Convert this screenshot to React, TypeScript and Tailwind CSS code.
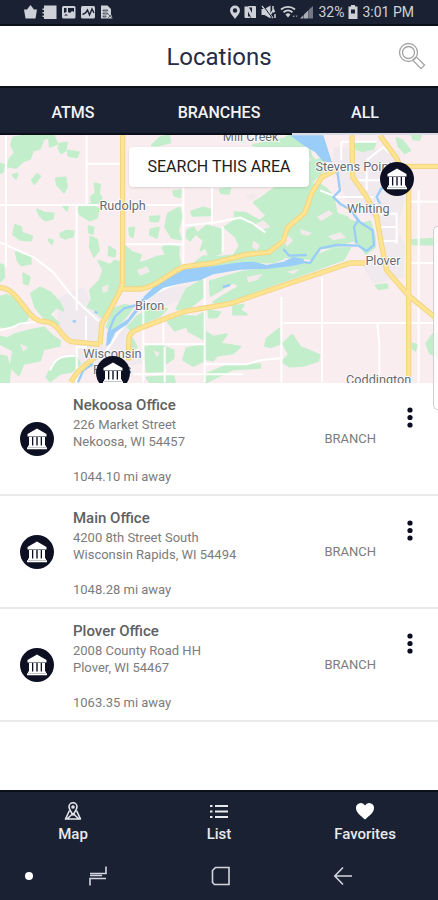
import { useState } from 'react'
import type { ReactNode } from 'react'

interface Office {
    name: string
    street: string
    city: string
    distance: string
    type: string
}

const offices: Office[] = [
    { name: 'Nekoosa Office', street: '226 Market Street', city: 'Nekoosa, WI 54457', distance: '1044.10 mi away', type: 'BRANCH' },
    { name: 'Main Office', street: '4200 8th Street South', city: 'Wisconsin Rapids, WI 54494', distance: '1048.28 mi away', type: 'BRANCH' },
    { name: 'Plover Office', street: '2008 County Road HH', city: 'Plover, WI 54467', distance: '1063.35 mi away', type: 'BRANCH' },
]

const tabs = ['ATMS', 'BRANCHES', 'ALL']

// Map shapes, all in the map's own 1314 x 741 units
const forests = [
    'M80 15 L160 15 L172 40 L150 48 L148 22 L132 24 L118 55 L98 60 L90 85 L70 92 L48 112 L24 108 L28 88 L45 68 L34 45 L40 22 Z',
    'M180 40 L200 38 L196 60 L184 68 L176 54 Z M204 62 L236 66 L230 80 L206 76 Z',
    'M0 100 L12 104 L8 124 L0 128 Z M38 134 L52 130 L48 144 Z M96 150 L112 132 L120 138 L104 160 Z',
    'M168 144 L196 142 L200 170 L192 186 L172 164 Z M190 228 L204 226 L200 240 Z',
    'M284 160 L300 164 L296 190 L304 200 L296 222 L276 218 L274 200 L288 188 Z',
    'M240 226 L270 222 L296 236 L290 262 L268 270 L240 252 L234 238 Z',
    'M112 238 L134 248 L160 250 L158 264 L136 270 L120 256 Z M146 328 L158 330 L156 340 Z',
    'M46 284 L62 290 L66 308 L96 318 L92 330 L60 328 L40 312 Z M182 310 L198 302 L220 304 L218 318 L196 324 L182 318 Z',
    'M266 288 L280 292 L278 310 L268 306 Z M272 320 L290 328 L296 360 L282 378 L270 350 Z',
    'M328 350 L346 362 L344 378 L326 374 Z M48 366 L76 378 L90 374 L92 400 L64 404 L54 392 Z M70 430 L88 440 L84 462 L72 458 Z',
    'M296 392 L332 404 L344 392 L362 396 L360 470 L340 510 L304 560 L280 536 L264 530 L276 506 L270 480 L300 450 L310 420 Z',
    'M376 348 L396 366 L422 374 L414 400 L440 392 L470 380 L500 376 L530 352 L540 400 L520 424 L470 460 L430 474 L376 470 Z',
    'M488 352 L500 344 L536 352 L534 372 L500 378 Z M450 260 L478 258 L474 272 L452 272 Z M388 294 L402 292 L398 320 L390 314 Z',
    'M452 298 L476 292 L470 322 L450 312 Z M504 250 L538 232 L544 260 L534 300 L542 326 L516 322 L496 290 Z',
    'M574 244 L610 232 L636 240 L632 254 L578 256 Z M520 184 L542 180 L540 200 L524 196 Z M456 45 L480 22 L506 15 L510 36 L470 46 Z',
    'M562 300 L580 292 L590 306 L570 330 L560 320 Z M590 312 L620 286 L664 298 L662 368 L628 376 L616 350 L602 360 L612 330 Z',
    'M674 290 L708 270 L704 246 L736 248 L780 272 L800 254 L784 240 L770 214 L812 182 L840 164 L930 166 L956 160 L980 176 L1000 200 L1010 250 L1042 262 L1056 290 L1060 330 L1000 350 L960 354 L946 386 L860 380 L840 376 L806 372 L700 378 L720 346 L706 318 Z',
    'M610 378 L660 380 L800 366 L850 384 L820 396 L720 392 L610 414 L570 410 Z',
    'M762 216 L784 204 L800 220 L778 232 Z M700 264 L730 280 L724 300 L704 290 Z M660 178 L690 174 L686 190 L664 188 Z',
    'M630 454 L680 438 L730 424 L860 412 L930 400 L960 372 L1000 356 L1050 352 L1030 388 L920 428 L800 470 L700 512 L640 516 L680 490 L720 468 L700 456 L660 480 L632 496 Z',
    'M880 160 L920 100 L960 86 L980 110 L940 150 L920 190 L880 210 Z M760 44 L850 26 L870 15 L900 40 L920 60 L950 98 L940 110 L928 54 L780 52 Z',
    'M1066 40 L1126 38 L1120 54 L1086 62 L1066 54 Z M1190 24 L1206 30 L1230 60 L1214 68 L1196 48 Z M1236 15 L1262 15 L1258 28 L1240 26 Z',
    'M1050 270 L1080 282 L1110 274 L1124 320 L1124 350 L1098 370 L1076 340 L1060 330 Z',
    'M1232 330 L1300 326 L1304 342 L1240 342 Z M1128 466 L1160 462 L1162 472 L1136 476 Z M1238 640 L1250 644 L1246 660 L1238 654 Z',
    'M1280 640 L1300 610 L1314 612 L1314 680 L1290 668 Z',
    'M0 402 L10 406 L12 440 L2 452 L0 452 Z M0 500 L20 494 L46 506 L70 526 L84 560 L74 578 L54 584 L20 594 L0 588 Z',
    'M94 490 L120 472 L150 486 L178 516 L190 540 L170 530 L148 552 L176 580 L160 576 L130 560 L106 530 Z',
    'M44 612 L90 600 L132 592 L156 616 L180 632 L178 646 L130 656 L120 690 L70 700 L56 734 L32 710 L40 660 L0 640 L0 620 L24 624 Z',
    'M0 676 L20 680 L30 720 L26 756 L0 756 Z M160 700 L190 684 L226 676 L240 700 L214 724 L180 730 L150 752 L140 740 Z',
    'M340 536 L372 524 L398 530 L380 556 L356 582 L336 600 L320 590 Z M384 590 L410 560 L450 534 L472 530 L500 536 L480 556 L430 578 L396 600 Z',
    'M560 476 L606 450 L608 500 L570 530 L530 536 Z M504 574 L550 556 L590 560 L614 546 L616 630 L566 602 L560 588 L524 600 Z',
    'M436 650 L476 644 L520 660 L520 684 L496 700 L490 722 L440 724 Z M560 654 L610 644 L612 690 L580 706 L550 688 Z',
    'M618 606 L640 620 L680 612 L660 640 L720 650 L700 668 L650 676 L640 690 L618 686 Z M626 540 L660 546 L650 560 L628 562 Z',
    'M800 626 L838 596 L840 640 L812 650 L796 646 Z M850 640 L876 614 L900 650 L958 674 L954 692 L910 706 L868 708 L848 694 L868 672 Z',
    'M612 734 L680 706 L780 702 L780 712 L700 716 L650 740 L618 756 Z M440 742 L520 736 L524 756 L450 756 Z',
    'M700 528 L730 524 L720 540 L740 552 L700 552 Z M386 616 L400 630 L410 650 L398 660 Z',
]

const clearings = [
    'M736 196 L760 188 L774 200 L750 212 Z M840 326 L862 314 L880 330 L862 348 Z M950 260 L986 240 L1000 250 L964 272 Z',
    'M900 296 L936 308 L924 316 L904 312 Z M984 318 L1020 306 L1040 322 L1000 330 Z M760 284 L790 270 L812 290 L780 300 Z',
    'M410 420 L440 408 L450 424 L420 436 Z M306 470 L326 462 L322 484 L308 488 Z M760 330 L780 346 L770 360 L756 350 Z',
    'M740 440 L790 430 L770 450 L744 456 Z M860 424 L900 416 L880 432 Z M460 660 L480 668 L470 680 Z M60 640 L84 650 L70 664 Z',
]

const towns = [
    'M176 500 L250 470 L300 560 L300 640 L210 630 L170 580 Z',
    'M230 650 L330 640 L380 570 L400 590 L390 660 L430 670 L430 700 L290 720 L240 700 Z',
    'M480 470 L560 466 L540 510 L490 530 L440 510 Z',
    'M1000 50 L1200 60 L1214 210 L1190 300 L1216 340 L1210 440 L1120 460 L1090 410 L1150 370 L1130 270 L1040 210 L1000 110 Z',
]

const minorRoads = [
    'M18 15 V410', 'M0 224 H548', 'M260 15 V224', 'M260 100 H370', 'M230 224 V540', 'M376 342 H548', 'M550 170 V400',
    'M636 170 V284', 'M552 286 L650 276 L720 262 L760 280 L796 306', 'M668 290 V366', 'M0 336 L100 380 L160 426 L210 490 L260 540 L296 572',
    'M0 600 L40 590 L60 580 L110 574', 'M258 556 V650 H230 V756', 'M430 530 V756', 'M614 446 V756', 'M490 560 V640', 'M430 642 H614',
    'M494 650 V756', 'M400 732 H730', 'M614 702 H740 L780 690 L840 684', 'M844 500 V756', 'M966 440 V756', 'M850 578 H1300',
    'M1132 580 L1138 640 V756', 'M1256 180 V756', 'M1230 214 H1314', 'M1230 398 H1314', 'M960 180 L1010 200 L1120 200',
    'M1024 34 H1130 M1024 34 V90 M1100 90 L1150 50 L1170 70', 'M1150 332 H1190 M1140 290 H1190 M1140 250 H1190 V340',
    'M1060 150 H1140 M1100 110 V180', 'M150 720 C170 670 200 680 226 676', 'M320 660 L360 600 L410 540 L460 490 L530 460',
]

const mainRoads = [
    'M368 15 V460 L356 490 L326 546 L306 580 L300 642',
    'M0 472 C30 472 50 500 70 526 C110 580 116 570 148 576 C180 584 180 620 214 634 L300 642',
    'M366 476 H420 C470 470 500 432 550 410 L640 398 L740 372 L806 366 L850 332 L862 292 L914 248 L936 186 L966 140 L1010 118',
    'M212 756 L232 726 L268 694 L292 676',
    'M386 690 V630 C388 606 400 602 430 590 L550 544 L690 520 L860 462 L1050 398 H1096',
    'M1056 15 L1058 140 L1100 200 L1130 260 L1144 340 L1160 420 L1226 496 L1304 560',
    'M1140 15 L1190 84 L1200 108 H1314',
    'M1226 170 V740',
]

const water = [
    'M870 15 L970 15 L996 96 L970 94 L946 66 L912 46 Z',
    'M430 500 L470 462 L530 426 L560 412 L640 408 L720 396 L760 394 L800 404 L850 394 L880 380 L912 386 L910 400 L870 408 L800 416 L720 418 L640 432 L600 450 L540 460 L490 472 L440 510 Z',
    'M318 648 L322 606 L348 590 L384 566 L410 530 L416 540 L382 582 L346 606 L330 640 Z',
]

const streams = [
    'M326 604 L344 560 L372 534 L410 524 L440 500',
    'M900 394 L930 398 L960 354 L1010 344 L1076 346 L1100 362 L1122 344 L1118 300 L1080 276 L1060 250',
    'M1070 340 L1062 290 L1074 270 L1054 240 L1020 220 L1000 200 L1020 180 L1010 110',
    'M1140 220 L1130 200 L1144 174 L1170 172', 'M850 356 L868 376 L920 374', 'M234 756 L250 720 L280 700',
    'M668 470 L690 464 M284 544 L292 548 M218 572 L228 574',
]

const mapLabels = [
    { text: 'Mill Creek', x: 752, y: 32 },
    { text: 'Rudolph', x: 368, y: 238 },
    { text: 'Stevens Point', x: 1062, y: 123 },
    { text: 'Whiting', x: 1105, y: 249 },
    { text: 'Plover', x: 1149, y: 404 },
    { text: 'Biron', x: 449, y: 539 },
    { text: 'Wisconsin', x: 337, y: 683 },
    { text: 'Rapids', x: 337, y: 730 },
    { text: 'Coddington', x: 1136, y: 760 },
]

function BankBadge() {
    return (
        <svg viewBox="0 0 34 34" className="size-[34px] shrink-0" aria-hidden="true">
            <circle cx="17" cy="17" r="17" fill="#0c1022" />
            <g fill="#fff">
                <path d="M17 6.500 L26.500 12 V14.500 H7.500 V12 Z" />
                <path d="M9 15h3v9H9z M13.300 15h3v9h-3z M17.700 15h3v9h-3z M22 15h3v9h-3z" />
                <path d="M8 23.500h18v1.500H8z M7 25.300h20v2H7z" />
            </g>
        </svg>
    )
}

function StatusBar() {
    return (
        <div className="flex h-[26px] items-center justify-between border-b-2 border-[#0b0f19] bg-[#1a2133] px-6 text-[#cfd1d8]">
            <svg viewBox="0 0 90 16" className="h-4 w-[90px]" fill="currentColor" aria-label="Notifications">
                <path d="M0 5.500h3L6.500 1 10 5.500h3l-1.500 9h-10z" />
                <path d="M20 1.500h12.500v13.500H20v-2h-1.500v-1.500H20V9.500h-1.500V8H20V6h-1.500V4.500H20z" />
                <rect x="38" y="2" width="13.500" height="12.500" rx="1.500" />
                <path d="M40 4h2.500v4l-2.500 1z M44 4h6v4l-2-1-2 2-2-1zM40 11.500l2-1.500 2 1.500z" fill="#1a2133" />
                <rect x="57" y="2" width="14" height="12.500" rx="1.500" />
                <path d="M58.500 10.500l3-1.500 2-3 2 5 2.500-6 2 4" fill="none" stroke="#1a2133" strokeWidth="1.400" />
                <path d="M77 1.500h6.500l3.500 3.500v5l1.500 4.500H77z" />
                <path d="M79 6h4.500v1H79z M79 9h4.500v1H79z M79 12h3v1h-3z M84 10l4 4 M88 10l-4 4" stroke="#1a2133" strokeWidth=".6" />
            </svg>
            <div className="flex items-center gap-1">
                <svg viewBox="0 0 86 16" className="h-4 w-[86px]" fill="currentColor" aria-label="Location, NFC, muted, Wi-Fi, signal">
                    <path fillRule="evenodd" d="M7 1.500a5 5 0 0 1 5 5C12 9.500 9 12 7 15 5 12 2 9.500 2 6.500a5 5 0 0 1 5-5zm0 2.800a2.200 2.200 0 1 0 0 4.400 2.200 2.200 0 0 0 0-4.400z" />
                    <path d="M16.500 2.500h4l3.500 6.500V3.500h-3.500V2h6.500a1 1 0 0 1 1 1v11h-4.500L20 7.500v5h2.500V14h-5a1 1 0 0 1-1-1z" />
                    <path d="M33.500 5h3l6-3.500v13l-6-3.500h-3z" />
                    <path d="M34 2l11 12M45 2v4M45 8l2-1M42 11l4-6M47 10v4" fill="none" stroke="currentColor" strokeWidth="1.500" />
                    <path d="M35 1.500l9 12" fill="none" stroke="#1a2133" strokeWidth="1" />
                    <path d="M53 5.500c4-3.600 10-3.600 14 0M55.500 8.300c2.800-2.400 6.200-2.400 9 0" fill="none" stroke="currentColor" strokeWidth="1.800" />
                    <path d="M57.500 10.500a3.500 3.500 0 0 1 5 0L60 13.500z" />
                    <path d="M64.500 13l1.200-2 1.200 2z M67.500 11.500l1.100 2 1.100-2z" opacity=".6" />
                    <path d="M72 14.500h3.500V11zM76 10.500v4h4.500V6z" opacity=".8" />
                    <path d="M81 5.500v9h4V2z" opacity=".5" />
                </svg>
                <span className="text-sm leading-none">32%</span>
                <svg viewBox="0 0 10 16" className="h-4 w-2.5" fill="currentColor" aria-label="Battery">
                    <path d="M3 1h4v1.500h2.500V15h-9V2.500H3z" />
                    <path d="M3 5.500h4v4H3z" fill="#1a2133" />
                </svg>
                <span className="text-sm leading-none">3:01 PM</span>
            </div>
        </div>
    )
}

function AreaMap() {
    return (
        <section className="relative h-[248px] overflow-hidden bg-[#f9edf0]" aria-label="Map">
            <svg viewBox="0 14 1314 744" preserveAspectRatio="xMidYMid slice" className="h-full w-full">
                <g fill="#f0eaee">{towns.map((d) => <path key={d} d={d} />)}</g>
                <g fill="#c3eecb" stroke="#c3eecb" strokeWidth="7" strokeLinejoin="round">
                    {forests.map((d) => <path key={d} d={d} />)}
                </g>
                <g fill="#f4eaec">{clearings.map((d) => <path key={d} d={d} />)}</g>
                <g fill="none" stroke="#fff" strokeWidth="6">{minorRoads.map((d) => <path key={d} d={d} />)}</g>
                <g fill="#9acdf8">{water.map((d) => <path key={d} d={d} />)}</g>
                <g fill="none" stroke="#9acdf8" strokeWidth="7" strokeLinejoin="round">
                    {streams.map((d) => <path key={d} d={d} />)}
                </g>
                <g fill="none" stroke="#f2d583" strokeWidth="16" strokeLinejoin="round">
                    {mainRoads.map((d) => <path key={d} d={d} />)}
                </g>
                <g fill="none" stroke="#fee491" strokeWidth="10" strokeLinejoin="round">
                    {mainRoads.map((d) => <path key={d} d={d} />)}
                </g>
                <g fill="#66696f" stroke="#fff" strokeWidth="5" paintOrder="stroke" textAnchor="middle" className="text-[38px]">
                    {mapLabels.map((label) => (
                        <text key={label.text} x={label.x} y={label.y}>{label.text}</text>
                    ))}
                </g>
            </svg>
            <div className="absolute inset-x-0 top-3 flex justify-center">
                <button className="h-10 w-[180px] rounded bg-white text-base text-[#1c1c1c] shadow-sm">SEARCH THIS AREA</button>
            </div>
            <button className="absolute top-[27px] right-6" aria-label="Plover Office"><BankBadge /></button>
            <button className="absolute top-[221px] left-24" aria-label="Main Office"><BankBadge /></button>
        </section>
    )
}

function OfficeRow({ office }: { office: Office }) {
    return (
        <li className="flex border-b-2 border-[#e9e9e9] pt-3 pb-[9px] pl-5">
            <div className="flex items-center pb-0.5"><BankBadge /></div>
            <div className="ml-[19px] flex-1 text-[13px] leading-[17px] text-[#7c7c7c]">
                <h2 className="text-[15px] leading-[21px] font-medium text-[#606060]">{office.name}</h2>
                <p>{office.street}</p>
                <p>{office.city}</p>
                <p className="mt-[18px]">{office.distance}</p>
            </div>
            <span className="self-center pb-0.5 text-[13px] text-[#7c7c7c]">{office.type}</span>
            <button className="mt-3 mr-5 ml-[26px] flex h-[22px] w-4 justify-center" aria-label={`Options for ${office.name}`}>
                <svg viewBox="0 0 6 22" className="h-[22px] w-1.5" fill="#0a0c20">
                    <circle cx="3" cy="3" r="2.600" />
                    <circle cx="3" cy="10.500" r="2.600" />
                    <circle cx="3" cy="18" r="2.600" />
                </svg>
            </button>
        </li>
    )
}

function NavItem({ label, children }: { label: string; children: ReactNode }) {
    return (
        <button className="flex flex-1 flex-col items-center gap-[3px] text-[15px] leading-5 font-medium text-[#e8e9ed]">
            <svg viewBox="0 0 20 20" className="size-5" aria-hidden="true">{children}</svg>
            {label}
        </button>
    )
}

export default function App() {
    const [active, setActive] = useState('ALL')

    return (
        <div className="relative flex min-h-screen flex-col bg-white font-[Roboto,'Liberation_Sans',sans-serif]">
            <StatusBar />
            <header className="grid h-[60px] grid-cols-[1fr_auto_1fr] items-center bg-white">
                <h1 className="col-start-2 pt-0.5 text-2xl text-[#272b45]">Locations</h1>
                <button className="mr-3 justify-self-end" aria-label="Search">
                    <svg viewBox="0 0 28 28" className="size-7" fill="none" stroke="#a3a3a3" strokeWidth="1.300">
                        <circle cx="10.500" cy="10.500" r="9" />
                        <circle cx="10.500" cy="10.500" r="6" />
                        <path d="M15.500 17.500l1.300-1.300M17.500 15.500l-.8.800M14.800 18.200l3.400-3.400 8.300 8.300-3.500 3.500z" />
                    </svg>
                </button>
            </header>
            <nav className="flex h-[49px] border-t-2 border-[#0b0f19] bg-[#1a2133]" aria-label="Location type">
                {tabs.map((tab) => (
                    <button
                        key={tab}
                        onClick={() => setActive(tab)}
                        className={`flex-1 border-b-2 pt-1 text-base font-medium text-[#f3f3f5] ${active === tab ? 'border-[#d9dce2]' : 'border-[#0b0f19]'}`}
                    >
                        {tab}
                    </button>
                ))}
            </nav>
            <AreaMap />
            <ul className="flex-1">
                {offices.map((office) => <OfficeRow key={office.name} office={office} />)}
            </ul>
            {/* edge panel handle of the phone */}
            <div className="absolute top-[226px] right-0 h-[184px] w-[5px] rounded-l-md border border-r-0 border-[#cfcfcf] bg-white/80" />
            <nav className="flex h-[62px] border-t-2 border-[#0b0f19] bg-[#1a2133] pt-[9px]" aria-label="Main">
                <NavItem label="Map">
                    <g fill="none" stroke="#e8e9ed" strokeWidth="1.600" strokeLinejoin="round">
                        <path d="M10 14C8 10.500 6 8.500 6 5.800a4 4 0 0 1 8 0C14 8.500 12 10.500 10 14z" />
                        <path d="M6.500 9.500L2.500 18H17.500L13.500 9.500M4.500 17.500L10 12.500l5.500 5" />
                        <circle cx="10" cy="6" r="1" />
                    </g>
                </NavItem>
                <NavItem label="List">
                    <path d="M1 4h2.500v2H1z M6 4h13v2H6z M1 9.500h2.500v2H1z M6 9.500h13v2H6z M1 15h2.500v2H1z M6 15h13v2H6z" fill="#e8e9ed" />
                </NavItem>
                <NavItem label="Favorites">
                    <path d="M10 18.500C6 15 1 11.500 1 7a4.800 4.800 0 0 1 9-2.400A4.800 4.800 0 0 1 19 7c0 4.500-5 8-9 11.500z" fill="#fff" />
                </NavItem>
            </nav>
            <div className="grid h-12 grid-cols-[58px_80px_1fr_80px_55px] items-center justify-items-center bg-[#1a2133] text-[#d3d6df]">
                <button aria-label="Pin bar">
                    <svg viewBox="0 0 8 8" className="size-2"><circle cx="4" cy="4" r="4" fill="#fff" /></svg>
                </button>
                <button aria-label="Recent apps">
                    <svg viewBox="0 0 20 20" className="size-5" fill="none" stroke="currentColor" strokeWidth="1.600">
                        <path d="M2 7.500H18V.5M2 19.500V12.500H18M2 9.500H14" />
                    </svg>
                </button>
                <button aria-label="Home">
                    <svg viewBox="0 0 20 20" className="size-5" fill="none" stroke="currentColor" strokeWidth="1.600">
                        <path d="M4.500 1.500H18V18.500H3.500L1.500 16.500V4.500z" />
                    </svg>
                </button>
                <button aria-label="Back">
                    <svg viewBox="0 0 20 20" className="size-5" fill="none" stroke="currentColor" strokeWidth="1.600">
                        <path d="M19 10H2M10 1.500L1.800 10 10 18.500" />
                    </svg>
                </button>
            </div>
        </div>
    )
}
